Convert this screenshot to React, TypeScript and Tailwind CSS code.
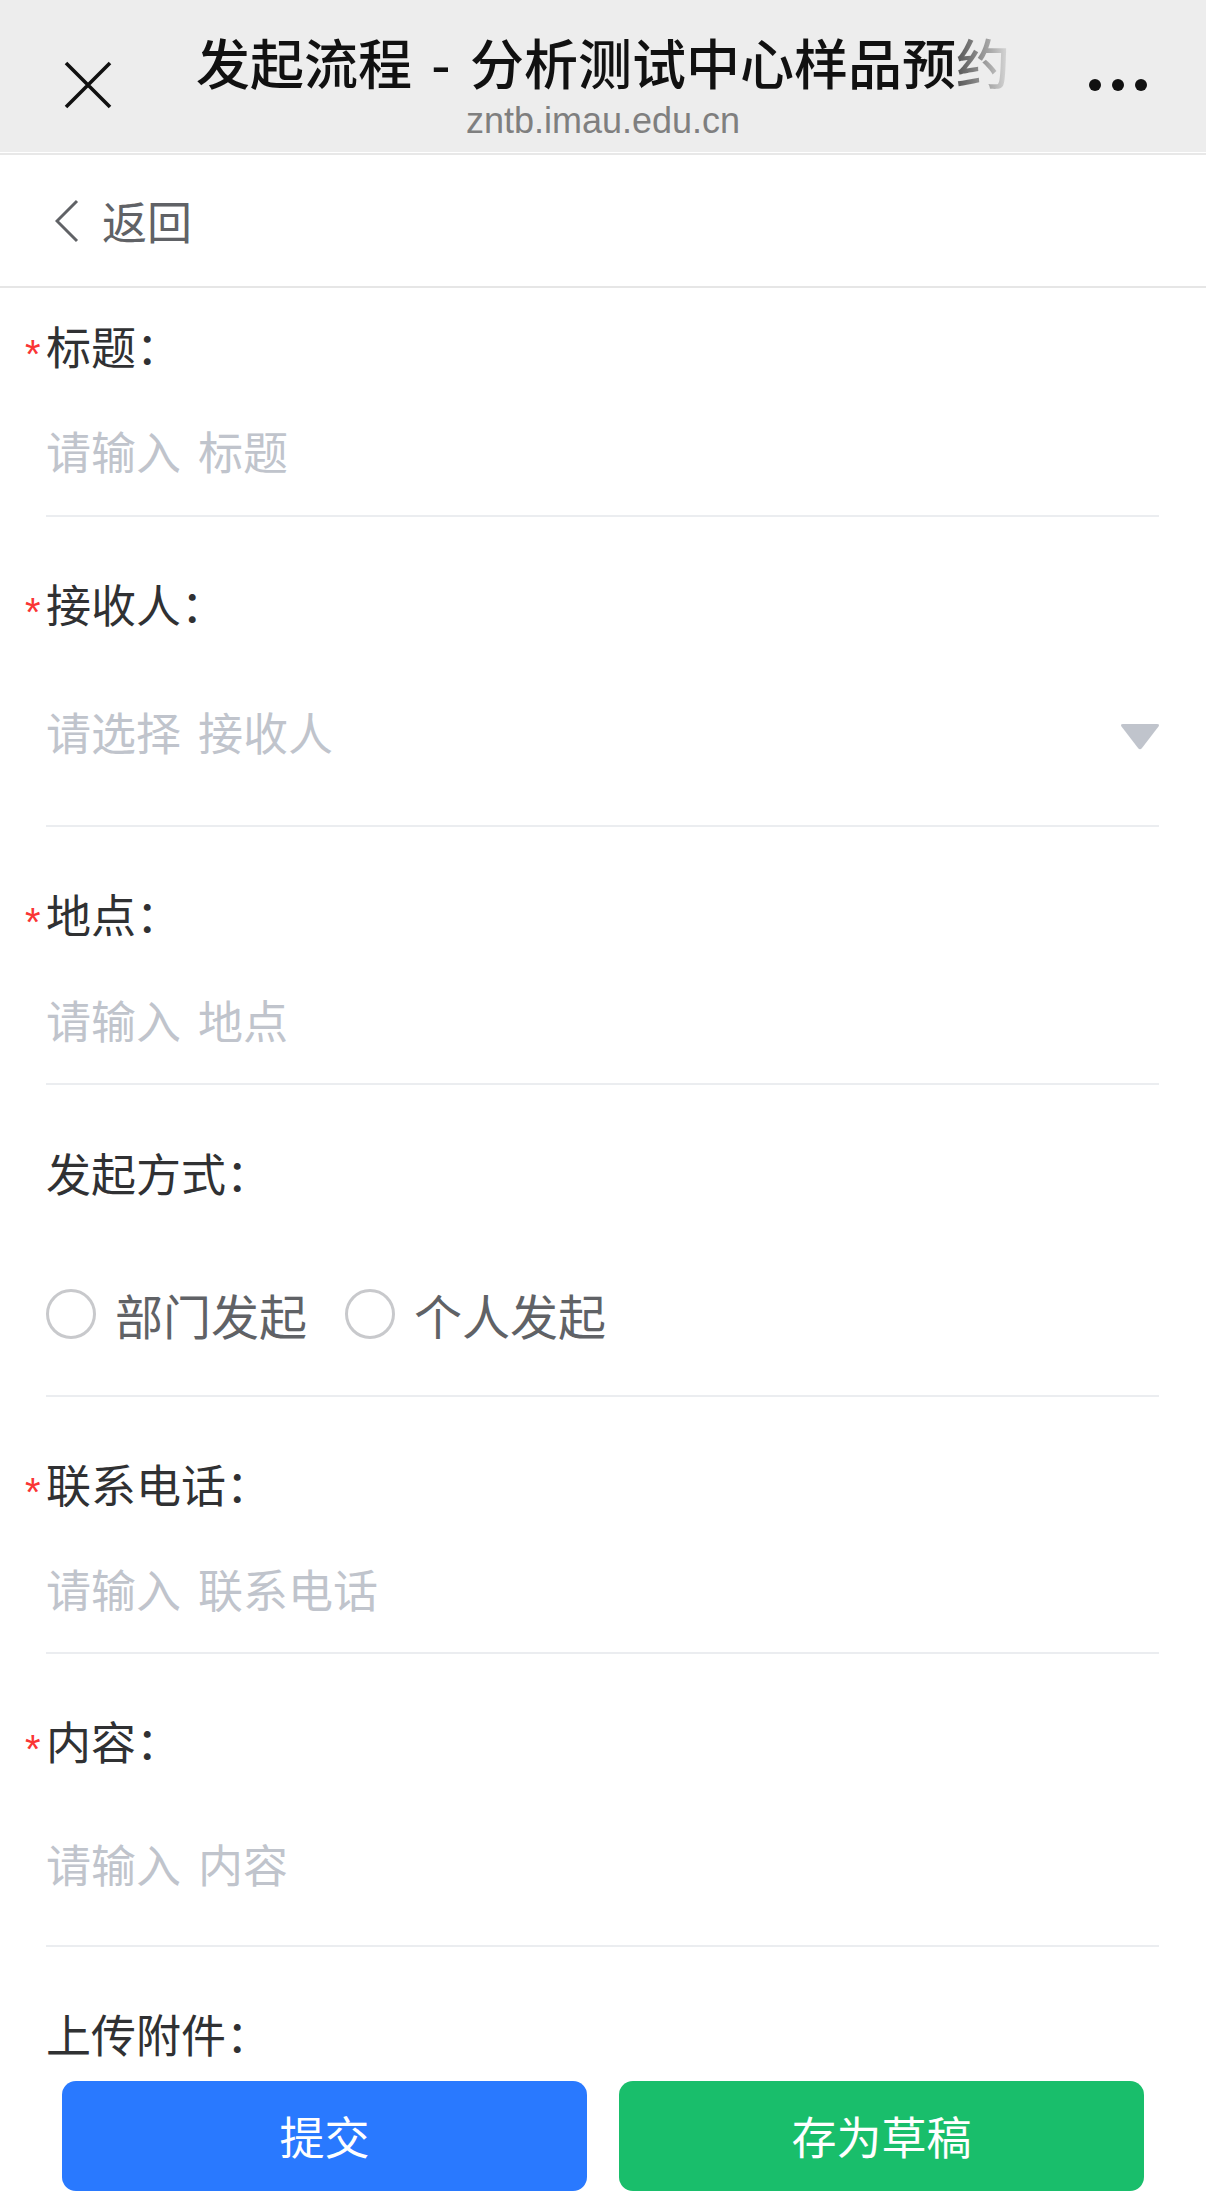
import React from "react";

function Star() {
  return (
    <span className="-ml-[21px] w-[21px] inline-block text-[40px] leading-[40px] text-[#fa3534] font-['Liberation_Sans',sans-serif] translate-y-[8px]">
      *
    </span>
  );
}

function Label({ text, required }: { text: string; required?: boolean }) {
  return (
    <div className="h-[48px] flex items-center text-[45px] leading-[48px] text-[#303133]">
      {required && <Star />}
      <span>{text}：</span>
    </div>
  );
}

function Placeholder({ a, b }: { a: string; b: string }) {
  return (
    <div className="h-[48px] leading-[48px] text-[45px] text-[#c0c4cc] whitespace-nowrap flex">
      <span>{a}</span>
      <span className="inline-block w-[17px]" />
      <span>{b}</span>
    </div>
  );
}

function Radio({ text }: { text: string }) {
  return (
    <div className="flex items-center h-[50px]">
      <div className="w-[50px] h-[50px] rounded-full border-[3px] border-[#c8c9cc] box-border" />
      <span className="ml-[19px] text-[48px] leading-[50px] text-[#606266]">{text}</span>
    </div>
  );
}

export default function App() {
  return (
    <div className="w-[1206px] h-[2202px] bg-white font-['Noto_Sans_CJK_SC',sans-serif] overflow-hidden flex flex-col">
      {/* WeChat header */}
      <div className="h-[152px] bg-[#ededed] flex shrink-0">
        <div className="w-[175px] pl-[64px] pt-[61px] shrink-0">
          <svg width="48" height="48" viewBox="0 0 48 48">
            <path d="M2 2 L46 46 M46 2 L2 46" stroke="#111" strokeWidth="3.6" fill="none" />
          </svg>
        </div>
        <div className="flex-1 min-w-0 flex flex-col items-center pt-[35px]">
          <div className="h-[54px] flex items-center text-[54px] leading-[54px] font-medium text-[#111] whitespace-nowrap">
            <span className="inline-block leading-[54px]">发起流程</span>
            <span className="inline-block w-[58px] text-center leading-[54px]">-</span>
            <span className="inline-block leading-[54px]">分析测试中心样品预</span>
            <span className="inline-block leading-[54px] bg-linear-to-r from-[#555555] to-[#dedede] bg-clip-text text-transparent">约</span>
          </div>
          <div className="mt-[12px] h-[40px] text-[36px] leading-[40px] text-[#7f7f7f] font-['Liberation_Sans',sans-serif]">
            zntb.imau.edu.cn
          </div>
        </div>
        <div className="w-[175px] pr-[59px] pt-[79px] flex justify-end gap-[11px] shrink-0">
          <div className="w-[12px] h-[12px] rounded-full bg-[#111]" />
          <div className="w-[12px] h-[12px] rounded-full bg-[#111]" />
          <div className="w-[12px] h-[12px] rounded-full bg-[#111]" />
        </div>
      </div>
      <div className="h-[1px] bg-white shrink-0" />
      <div className="h-[2px] bg-[#e8e8e8] shrink-0" />

      {/* nav bar */}
      <div className="h-[133px] flex items-center border-b-2 border-[#e6e6e6] shrink-0 pl-[55px]">
        <svg width="24" height="44" viewBox="0 0 24 44">
          <polyline points="22,2 2,22 22,42" stroke="#606266" strokeWidth="3" fill="none" />
        </svg>
        <span className="ml-[23px] text-[45px] leading-[48px] text-[#606266]">返回</span>
      </div>

      {/* form */}
      <div className="ml-[46px] mr-[47px] flex flex-col">
        <div className="pt-[34px] pb-[40px] border-b-2 border-[#ebedf0]">
          <Label text="标题" required />
          <div className="mt-[57px]">
            <Placeholder a="请输入" b="标题" />
          </div>
        </div>

        <div className="pt-[63px] pb-[69px] border-b-2 border-[#ebedf0]">
          <Label text="接收人" required />
          <div className="mt-[80px] flex items-center justify-between">
            <Placeholder a="请选择" b="接收人" />
            <svg width="40" height="27" viewBox="0 0 40 27" className="mt-[8px] -mr-[1px]">
              <path d="M3 1 L37 1 Q40 1 38.5 3.5 L22 25 Q20 27.5 18 25 L1.5 3.5 Q0 1 3 1 Z" fill="#c0c4cc" />
            </svg>
          </div>
        </div>

        <div className="pt-[63px] pb-[39px] border-b-2 border-[#ebedf0]">
          <Label text="地点" required />
          <div className="mt-[58px]">
            <Placeholder a="请输入" b="地点" />
          </div>
        </div>

        <div className="pt-[64px] pb-[56px] border-b-2 border-[#ebedf0]">
          <Label text="发起方式" />
          <div className="mt-[92px] flex items-center gap-[38px]">
            <Radio text="部门发起" />
            <Radio text="个人发起" />
          </div>
        </div>

        <div className="pt-[63px] pb-[39px] border-b-2 border-[#ebedf0]">
          <Label text="联系电话" required />
          <div className="mt-[57px]">
            <Placeholder a="请输入" b="联系电话" />
          </div>
        </div>

        <div className="pt-[63px] pb-[57px] border-b-2 border-[#ebedf0]">
          <Label text="内容" required />
          <div className="mt-[75px]">
            <Placeholder a="请输入" b="内容" />
          </div>
        </div>

        <div className="pt-[63px]">
          <Label text="上传附件" />
        </div>
      </div>

      {/* buttons */}
      <div className="mt-[23px] px-[62px] flex gap-[32px] shrink-0">
        <div className="flex-1 h-[110px] rounded-[14px] bg-[#2979ff] flex items-center justify-center text-white text-[45px] leading-[48px]">
          提交
        </div>
        <div className="flex-1 h-[110px] rounded-[14px] bg-[#19be6b] flex items-center justify-center text-white text-[45px] leading-[48px]">
          存为草稿
        </div>
      </div>
    </div>
  );
}
